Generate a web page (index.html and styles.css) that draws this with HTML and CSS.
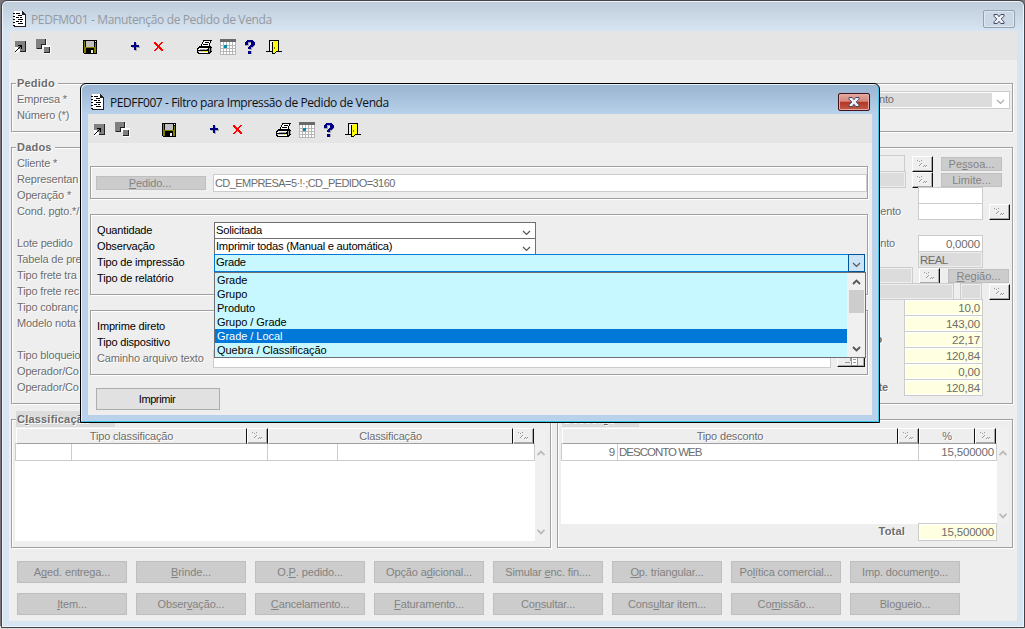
FILE: index.html
```html
<!DOCTYPE html>
<html lang="pt-BR">
<head>
<meta charset="utf-8">
<title>Manutenção de Pedido de Venda</title>
<link rel="stylesheet" href="styles.css">
</head>
<body>
<svg class="defs" width="0" height="0">
  <symbol id="doc" viewBox="0 0 13 16"><path d="M1 0h8l3 3v13H1z" fill="#fff"/><path d="M9 0h1v1h1v1h1v1h1v13H1v-1h11V4H9z" fill="#222"/><path d="M0 2h2v1H0zM0 5h2v1H0zM0 8h2v1H0zM0 11h2v1H0zM0 14h2v1H0zM3 2h4v1H3zM5 4h4v1H5zM3 6h3v1H3zM7 6h2v1H7zM5 8h5v1H5zM3 10h3v1H3zM7 10h2v1H7zM5 12h5v1H5z"/></symbol>
  <symbol id="run" viewBox="0 0 16 16"><path d="M1 2h10v10H1z" fill="#808080"/><path d="M11 2h1v11H6v-1h5z" fill="#222"/><path d="M1 8h3v1h1v1h1v2H5v1H3v1H1z" fill="#fff"/><path d="M4 6h4v4H7V8H6v1H5v1H4v1H3v1H2v1H1v-1h1v-1h1v-1h1V9h1V8h1V7H4z"/></symbol>
  <symbol id="copy" viewBox="0 0 16 16"><path d="M1 1h10v5h4v9H8v-5H1z" fill="#fff"/><path d="M0 0h10v5H5v5H0zM8 8h6v6H8z" fill="#808080"/><path d="M10 0v6H6v4H1V9h4V5h4V0zM13 8h1v6H8v-1h5z" fill="#222"/></symbol>
  <symbol id="save" viewBox="0 0 16 16"><path d="M1 1h14v14H2v-1H1z"/><path d="M2 2h1v12H2zM13 4h1v10h-1zM3 8h10v1H3zM3 9h1v5H3zM12 9h1v5h-1z" fill="#808000"/><path d="M4 2h8v6H4z" fill="#c0c0c0"/><path d="M13 2h1v1h-1zM9 11h2v3H9z" fill="#eee"/></symbol>
  <symbol id="plus" viewBox="0 0 16 16"><path d="M5 4h2v3h3v2H7v3H5V9H2V7h3z" fill="#aaa"/><path d="M4 3h2v3h3v2H6v3H4V8H1V6h3z" fill="#000084"/></symbol>
  <symbol id="del" viewBox="0 0 16 16"><path d="M1 3h2v1h1v1h1v1h1V5h1V4h1V3h2v1H9v1H8v1H7v2h1v1h1v1h1v2H8v-1H7v-1H6V9H5v1H4v1H3v1H1v-1h1v-1h1V9h1V7H3V6H2V5H1z" fill="#f00"/></symbol>
  <symbol id="print" viewBox="0 0 16 16"><path d="M6 1h9v1h-1v2h-1v3h1v1h1v5h-1v1h-1v1H1v-1H0V9h1V8h1V7h2V5h1V3h1z"/><path d="M7 2h6v2h-1v3H5V5h1V3h1zM2 9h9v1h-1v1H1v-1h1zM2 13h9v1H2z" fill="#fff"/><path d="M8 3h4v1H8zM6 5h5v1H6z"/><path d="M3 10h7v1H3zM12 9h1v4h-1zM14 9h1v3h-1z" fill="#a0a0a0"/><path d="M1 12h10v1H1z" fill="#ccc"/><path d="M7 12h3v1H7z" fill="#ee0"/></symbol>
  <symbol id="cal" viewBox="0 0 16 16"><path d="M0 0h16v16H0z" fill="#fff"/><path d="M0 0h16v3H0z" fill="#696969"/><path d="M0 3h1v13H0zM3 3h1v13H3zM6 3h1v13H6zM9 3h1v13H9zM12 3h1v13h-1zM15 3h1v13h-1zM0 6h16v1H0zM0 9h16v1H0zM0 12h16v1H0zM0 15h16v1H0z" fill="#b6b6b6"/><path d="M4 6h3v3H4z" fill="#08a"/></symbol>
  <symbol id="help" viewBox="0 0 16 16"><path d="M4 2h7v1h1v4h-1v1h-1v1H9v2H6V8h1V7h1V6h1V4H6v3H2V3h2zM6 12h3v3H6z" fill="#aaa"/><path d="M4 1h6v1h1v1h1v3h-1v1h-1v1H8v2H5V8h1V7h1V6h1V3H5v3H2V3h1V2h1zM5 12h3v3H5z" fill="#000084"/></symbol>
  <symbol id="door" viewBox="0 0 16 16"><path d="M4 2h3v10H4z" fill="#eee"/><path d="M7 3h1V2h4v10h-2v1H9v1H7z" fill="#ff0"/><path d="M3 1h10v1H3zM3 2h1v11H0v-1h3zM4 12h2v1H4zM12 2h1v10h3v1h-4zM6 3h1v12H6zM7 14h2v1H7zM9 13h1v1H9zM10 12h2v1h-2z"/><path d="M8 8h1v2H8z" fill="#770"/></symbol>
  <symbol id="look" viewBox="0 0 11 10"><path d="M0 1h1v1H0zM2 2h1v1H2zM4 1h1v1H4zM2 6h1v1H2zM3 5h1v1H3zM4 4h1v1H4zM6 7h1v1H6zM7 6h1v1H7zM9 6h1v1H9zM8 7h1v1H8z" fill="#999"/><path d="M1 3h1v1H1zM4 6h1v1H4zM7 8h1v1H7zM9 8h1v1H9zM5 5h1v1H5z" fill="#fff"/></symbol>
  <symbol id="down" viewBox="0 0 8 6"><path d="M.5 1L4 4.5 7.5 1" fill="none" stroke="currentColor" stroke-width="var(--sw,1.2)" shape-rendering="auto"/></symbol>
  <symbol id="up" viewBox="0 0 8 6"><path d="M.5 5L4 1.5 7.5 5" fill="none" stroke="currentColor" stroke-width="var(--sw,1.2)" shape-rendering="auto"/></symbol>
  <symbol id="close" viewBox="0 0 12 10"><path d="M1 .5h3.2L6 2.7 7.8.5H11v1.7L8.2 5 11 7.8v1.7H7.8L6 7.3 4.2 9.5H1V7.8L3.8 5 1 2.2z" fill="#eef2f7" stroke="#46485f" shape-rendering="auto"/></symbol>
</svg>

<main class="window main">
  <header class="title"><svg class="doc"><use href="#doc"/></svg><h1>PEDFM001 - Manutenção de Pedido de Venda</h1><button class="close"><svg><use href="#close"/></svg></button></header>
  <section class="client">
    <nav class="tools">
      <svg><use href="#run"/></svg><svg><use href="#copy"/></svg><svg class="g30"><use href="#save"/></svg><svg class="g32"><use href="#plus"/></svg><svg><use href="#del"/></svg><svg class="g28"><use href="#print"/></svg><svg><use href="#cal"/></svg><svg><use href="#help"/></svg><svg><use href="#door"/></svg>
    </nav>
    <section class="group order">
      <h2>Pedido</h2>
      <div class="labels"><p>Empresa *</p><p>Número (*)</p></div>
      <div class="company"><span>nto</span><svg><use href="#down"/></svg></div>
    </section>
    <section class="group data">
      <h2>Dados</h2>
      <div class="labels"><p>Cliente *</p><p>Representan</p><p>Operação *</p><p>Cond. pgto.*/</p><p></p><p>Lote pedido</p><p>Tabela de pre</p><p>Tipo frete tra</p><p>Tipo frete rec</p><p>Tipo cobranç</p><p>Modelo nota f</p><p></p><p>Tipo bloqueio</p><p>Operador/Co</p><p>Operador/Co</p></div>
      <div class="values">
        <div class="row e8"><i class="field pale w40"></i><i class="look m7"><svg><use href="#look"/></svg></i><b class="btn m8">Pe<u>s</u>soa...</b></div>
        <div class="row e8"><i class="field gray w40"></i><i class="look m6"><svg><use href="#look"/></svg></i><b class="btn m8">Limite...</b></div>
        <div class="row e27"><i class="field w65"></i></div>
        <div class="row"><span class="lab">ento</span><i class="field w65 m17"></i><i class="look m6"><svg><use href="#look"/></svg></i></div>
        <div class="row"></div>
        <div class="row e27"><span class="lab">nto</span><i class="field w65 m23">0,0000</i></div>
        <div class="row e27"><i class="field gray w65 left real">REAL</i></div>
        <div class="row e1"><i class="field gray w40"></i><i class="look m6"><svg><use href="#look"/></svg></i><b class="btn m8"><u>R</u>egião...</b></div>
        <div class="row"><i class="field gray w90"></i><i class="field gray w22 m6"></i><i class="look m7"><svg><use href="#look"/></svg></i></div>
        <div class="row e27"><i class="field yellow w79">10,0</i></div>
        <div class="row e27"><i class="field yellow w79">143,00</i></div>
        <div class="row e27"><strong class="lab">o</strong><i class="field yellow w79 m22">22,17</i></div>
        <div class="row e27"><i class="field yellow w79">120,84</i></div>
        <div class="row e27"><i class="field yellow w79">0,00</i></div>
        <div class="row e27"><strong class="lab">te</strong><i class="field yellow w79 m16">120,84</i></div>
      </div>
    </section>
    <div class="lists">
      <section class="group classes">
        <h2 class="marked">C<u>l</u>assificação</h2>
        <div class="sheet">
          <div class="head"><span>Tipo classificação</span><i class="look"><svg><use href="#look"/></svg></i><span>Classificação</span><i class="look"><svg><use href="#look"/></svg></i></div>
          <div class="line"><span></span><span></span><span></span><span></span></div>
        </div>
        <div class="scroll"><svg><use href="#up"/></svg><svg><use href="#down"/></svg></div>
      </section>
      <section class="group discounts">
        <h2 class="marked">Descon<u>t</u>o</h2>
        <div class="sheet">
          <div class="head"><span>Tipo desconto</span><i class="look"><svg><use href="#look"/></svg></i><span>%</span><i class="look"><svg><use href="#look"/></svg></i></div>
          <div class="line"><span class="num">9</span><span>DESCONTO WEB</span><span class="num">15,500000</span></div>
        </div>
        <div class="scroll"><svg><use href="#up"/></svg><svg><use href="#down"/></svg></div>
        <div class="total"><strong>Total</strong><i class="field yellow">15,500000</i></div>
      </section>
    </div>
    <div class="actions">
      <b class="btn">A<u>g</u>ed. entrega...</b><b class="btn"><u>B</u>rinde...</b><b class="btn">O.<u>P</u>. pedido...</b><b class="btn">Opção a<u>d</u>icional...</b><b class="btn">Simular <u>e</u>nc. fin....</b><b class="btn"><u>O</u>p. triangular...</b><b class="btn">Po<u>l</u>ítica comercial...</b><b class="btn">Imp. documen<u>t</u>o...</b>
      <b class="btn"><u>I</u>tem...</b><b class="btn">Obser<u>v</u>ação...</b><b class="btn"><u>C</u>ancelamento...</b><b class="btn"><u>F</u>aturamento...</b><b class="btn">Co<u>n</u>sultar...</b><b class="btn">Cons<u>u</u>ltar item...</b><b class="btn">Co<u>m</u>issão...</b><b class="btn">Blo<u>q</u>ueio...</b>
    </div>
  </section>
</main>

<section class="window dialog">
  <header class="title"><svg class="doc"><use href="#doc"/></svg><h1>PEDFF007 - Filtro para Impressão de Pedido de Venda</h1><button class="close red"><svg><use href="#close"/></svg></button></header>
  <section class="client">
    <nav class="tools">
      <svg><use href="#run"/></svg><svg><use href="#copy"/></svg><svg class="g30"><use href="#save"/></svg><svg class="g32"><use href="#plus"/></svg><svg><use href="#del"/></svg><svg class="g28"><use href="#print"/></svg><svg><use href="#cal"/></svg><svg><use href="#help"/></svg><svg><use href="#door"/></svg>
    </nav>
    <div class="group query"><b class="btn"><u>P</u>edido...</b><i class="field left">CD_EMPRESA=5·!·;CD_PEDIDO=3160</i></div>
    <div class="group options">
      <div class="labels"><p>Quantidade</p><p>Observação</p><p>Tipo de impressão</p><p>Tipo de relatório</p></div>
      <div class="combos">
        <div class="combo"><span>Solicitada</span><svg><use href="#down"/></svg></div>
        <div class="combo"><span>Imprimir todas (Manual e automática)</span><svg><use href="#down"/></svg></div>
        <div class="combo open"><span>Grade</span><em><svg><use href="#down"/></svg></em>
          <div class="menu">
            <ul><li>Grade</li><li>Grupo</li><li>Produto</li><li>Grupo / Grade</li><li class="on">Grade / Local</li><li>Quebra / Classificação</li></ul>
            <div class="bar"><svg><use href="#up"/></svg><i></i><svg><use href="#down"/></svg></div>
          </div>
        </div>
      </div>
    </div>
    <div class="group device">
      <div class="labels"><p>Imprime direto</p><p>Tipo dispositivo</p><p class="off">Caminho arquivo texto</p></div>
      <i class="field path"></i>
      <i class="look browse"><svg viewBox="0 0 17 11"><path d="M0 0h7v5h2M2 7h5" fill="none" stroke="#999"/><path d="M8.500 1.500h6v9h-6z" fill="#fff" stroke="#999"/><path d="M10 4.500h3M10 7.500h3" stroke="#999"/></svg></i>
    </div>
    <b class="btn print">Imprimir</b>
  </section>
</section>
</body>
</html>
```
FILE: styles.css
```css
* { box-sizing: border-box; }
body { margin: 0; width: 1025px; height: 629px; overflow: hidden; position: relative; background: linear-gradient(#77747a 0 626px, #ddd 626px); font: 11px/16px "Liberation Sans", Arial, sans-serif; color: #6d6d6d; letter-spacing: -.16px; white-space: nowrap; }
h1, h2, p, ul { margin: 0; padding: 0; font-weight: normal; }
i, em { font-style: normal; }
.defs { position: absolute; }
svg { display: block; flex: none; overflow: visible; shape-rendering: crispEdges; }
u { text-decoration: underline; text-underline-offset: 1px; text-decoration-skip-ink: none; }

/* windows */
.window { position: absolute; display: flex; flex-direction: column; }
.main { left: 1px; top: 0; width: 1024px; height: 628px; padding: 0 7px 6px 7px; border: 1px solid #424248; border-radius: 6px 6px 0 0; background: linear-gradient(#bfccd9 2px, #d7e4f2 30px); box-shadow: inset 0 0 0 1px #eef4fa; }
.dialog { left: 80px; top: 83px; width: 800px; height: 340px; padding: 0 7px 7px; border: 1px solid #000; border-radius: 6px 6px 0 0; background: linear-gradient(#99b4d1 1px, #b9d1ea 30px, #b9d1ea); box-shadow: inset -1px -1px #3cc5e2, inset 1px 1px #eaf4fd; }
.title { flex: none; height: 30px; display: flex; align-items: center; padding: 7px 2px 0 4px; }
.title .doc { width: 13px; height: 16px; margin-top: -1px; }
.title h1 { flex: 1; margin-left: 5px; font: 12px/16px "Open Sans", "Noto Sans", sans-serif; letter-spacing: -.36px; color: #949aa1; }
.dialog .title h1 { color: #111; letter-spacing: -.41px; }
.dialog .title .doc { margin-left: -1px; margin-right: 1px; }
.close { width: 32px; height: 18px; padding: 0; border: 1px solid #93a0ae; border-radius: 2px; background: #cbd7e4; box-shadow: inset 0 0 0 1px #dfe8f2; display: grid; place-items: center; margin-bottom: 1px; }
.close svg { width: 12px; height: 10px; }
.close.red { border-color: #43131c; background: linear-gradient(#e3a79f, #d5877d 46%, #b33423 50%, #c25b49); box-shadow: inset 0 0 0 1px #e5aaa2; }
.client { flex: 1; min-height: 0; background: #eee; display: flex; flex-direction: column; }
.tools { flex: none; height: 29px; padding: 8px 5px; background: #e5e5e5; display: flex; gap: 7px; }
.tools svg { width: 16px; height: 16px; }
.tools svg:nth-child(2) { margin-left: -1px; }
.tools .g30 { margin-left: 23px; }
.tools .g32 { margin-left: 25px; }
.tools .g28 { margin-left: 21px; }

/* etched groups */
.group { flex: none; position: relative; display: flex; border: 1px solid #a0a0a0; box-shadow: 1px 1px #fff, inset 1px 1px #fff; }
.main .group { text-shadow: 1px 1px #fff; }
h2 { position: absolute; left: 4px; top: -9px; padding: 0 3px 0 1px; background: #eee; font: bold 11px/16px "Liberation Sans", Arial, sans-serif; letter-spacing: .2px; }
h2.marked { background: #dcdcdc; }
.labels p { height: 16px; }
.order { margin: 23px 4px 0 2px; height: 49px; padding: 7px 2px 0 5px; justify-content: space-between; }
.company { width: 200px; height: 18px; border: 1px solid #ccc; background: #fff; display: flex; padding: 1px 4px 1px 1px; align-items: center; justify-content: space-between; color: #aaa; }
.company span { width: 180px; height: 14px; line-height: 13px; background: #dcdcdc; color: #6d6d6d; padding-left: 67px; text-shadow: none; }
.company svg { width: 9px; height: 6px; margin-top: 3px; }
.data { margin: 15px 4px 0 2px; height: 257px; padding: 7px 2px 0 5px; justify-content: space-between; }
.values { width: 300px; }
.row { height: 16px; display: flex; justify-content: flex-end; }
.e27 { padding-right: 27px; }
.e8 { padding-right: 8px; }
.e1 { padding-right: 1px; }
.field { display: block; height: 17px; flex: none; border: 1px solid #ccc; background: #fff; padding: 0 2px; text-align: right; line-height: 16px; font-size: 11.5px; text-shadow: none; letter-spacing: -.18px; }
.gray { background: #dcdcdc; box-shadow: inset 0 0 0 1px #eee; }
.pale { background: #eee; }
.yellow { background: #ffffe1; box-shadow: inset 0 0 0 1px #fff; }
.left { text-align: left; padding: 0 1px; }
.real { letter-spacing: -.6px; }
.w22 { width: 22px; } .w40 { width: 40px; } .w65 { width: 65px; } .w79 { width: 79px; } .w90 { width: 90px; }
.m6 { margin-left: 6px; } .m7 { margin-left: 7px; } .m8 { margin-left: 8px; } .m16 { margin-left: 16px; } .m17 { margin-left: 17px; } .m22 { margin-left: 22px; } .m23 { margin-left: 23px; }
.look { flex: none; width: 21px; height: 16px; margin-top: 1px; border: 1px solid #fff; border-right-color: #111; border-bottom-color: #111; box-shadow: inset -1px -1px #aaa; background: #eee; display: grid; place-items: center; }
.look svg { width: 11px; height: 10px; }
.btn { flex: none; display: flex; align-items: center; justify-content: center; border: 1px solid #bfbfbf; background: #ccc; color: #838383; font-weight: normal; letter-spacing: -.12px; text-shadow: none; white-space: pre; }
.row .btn { width: 61px; height: 14px; margin-top: 2px; letter-spacing: 0; }

/* tables */
.lists { display: flex; gap: 6px; margin: 15px 0 0 2px; height: 129px; }
.group.classes { width: 540px; padding: 8px 3px 7px 3px; }
.group.discounts { width: 456px; padding: 8px 3px 0 3px; flex-wrap: wrap; align-content: flex-start; }
.classes .sheet { width: 520px; height: 113px; }
.discounts .sheet { width: 436px; height: 96px; }
.classes h2 { width: 99px; }
.discounts h2 { width: 77px; }
.sheet { background: linear-gradient(#eee 15px, #fff 15px); }
.head { display: flex; height: 16px; padding-left: 1px; }
.head span { text-align: center; border: 1px solid #fff; border-right-color: #111; border-bottom-color: #a0a0a0; line-height: 15px; }
.head .look { margin: 0; height: 16px; border-bottom-color: #a0a0a0; }
.classes .head span:first-child { width: 231px; }
.classes .head span:nth-child(3) { width: 245px; }
.discounts .head span:first-child { width: 336px; }
.discounts .head span:nth-child(3) { width: 56px; }
.line { display: grid; grid-template-columns: 56px 196px 70px 198px; height: 18px; margin-top: -1px; border: solid #ccc; border-width: 1px 0; text-shadow: none; font-size: 11.5px; letter-spacing: -1px; }
.line span { border-left: 1px solid #ccc; padding: 0 2px 0 1px; }
.line span:last-child { border-right: 1px solid #ccc; }
.line .num { text-align: right; letter-spacing: -.18px; }
.discounts .line { grid-template-columns: 56px 301px 79px; }
.scroll { width: 11px; display: flex; flex-direction: column; justify-content: space-between; align-items: center; background: #f0f0f0; color: #bbb; --sw: 1.8; padding: 22px 0 5px; }
.scroll svg { width: 8px; height: 6px; }
.discounts .scroll { height: 96px; }
.total { width: 436px; display: flex; justify-content: flex-end; margin-top: -1px; }
.total strong { margin-right: 13px; letter-spacing: .2px; }
.total .field { width: 79px; height: 18px; line-height: 17px; }
.actions { display: grid; grid-template-columns: repeat(8, 110px); grid-auto-rows: 22px; gap: 10px 9px; margin: 13px 0 0 8px; }

/* dialog content */
.dialog .group { margin-left: 2px; width: 778px; color: #000; }
.dialog .query { height: 33px; margin-top: 23px; padding: 7px 1px 0 5px; color: #6d6d6d; }
.query .btn { width: 110px; height: 14px; margin-top: 2px; padding-right: 2px; }
.query .field { width: 654px; height: 18px; margin-left: 7px; font-size: 11px; letter-spacing: -.57px; }
.dialog .options { height: 81px; margin-top: 15px; padding: 7px 0 0 5px; }
.dialog .labels { padding-left: 1px; }
.options .labels { width: 118px; }
.combo { position: relative; width: 322px; height: 18px; margin-bottom: -2px; padding: 0 4px 0 1px; border: 1px solid #707070; background: #fff; line-height: 14px; font-size: 11.2px; letter-spacing: -.25px; display: flex; align-items: flex-start; justify-content: space-between; color: #000; }
.combo svg { width: 9px; height: 6px; margin-top: 7px; color: #555; }
.combo.open { width: 651px; border-color: #0078d7; background: #c7f8ff; padding-right: 0; }
.open em { width: 17px; height: 18px; margin: -1px -1px 0 0; border: 1px solid #005499; background: #cce4f7; display: grid; place-items: center; }
.open em svg { margin-top: 3px; }
.menu { position: absolute; z-index: 2; left: 0; top: 17px; width: 651px; height: 86px; border: 1px solid #707070; border-left: 0; background: #c7f8ff; display: flex; box-shadow: -1px 0 #707070; font-size: 11px; letter-spacing: -.05px; }
.menu ul { flex: 1; list-style: none; }
.menu li { height: 14px; line-height: 14px; padding-left: 2px; }
.menu .on { background: #0078d7; color: #fff; }
.bar { width: 18px; background: #f0f0f0; display: flex; flex-direction: column; align-items: center; --sw: 1.8; }
.bar svg { margin: 6px 0 5px; }
.bar svg:last-child { margin-top: auto; }
.bar i { width: 15px; height: 23px; background: #cdcdcd; }
.dialog .device { height: 65px; margin-top: 15px; padding: 7px 0 0 5px; align-items: flex-end; }
.device .labels { width: 117px; align-self: flex-start; }
.off { color: #6d6d6d; text-shadow: 1px 1px #fff; }
.path { width: 618px; height: 18px; margin-bottom: 6px; }
.browse { width: 28px; height: 17px; margin: 0 0 7px 6px; }
.browse svg { width: 17px; height: 11px; margin-top: 3px; }
.btn.print { width: 124px; height: 22px; margin: 13px 0 0 8px; padding-right: 2px; border-color: #adadad; background: #e1e1e1; color: #000; letter-spacing: -.4px; }
```
